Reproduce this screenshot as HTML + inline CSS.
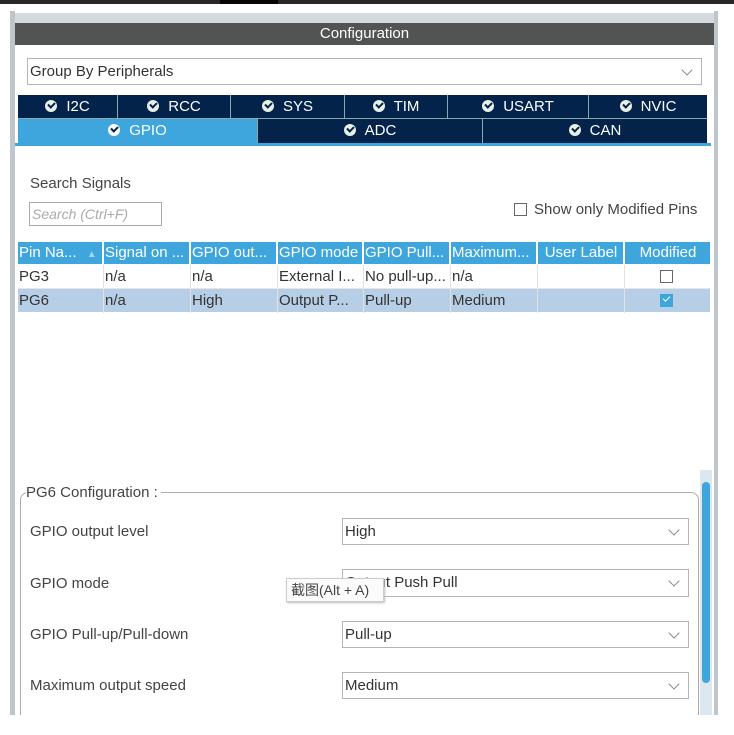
<!DOCTYPE html>
<html><head><meta charset="utf-8"><style>
*{margin:0;padding:0;box-sizing:border-box}
body{width:734px;height:724px;background:#fff;position:relative;overflow:hidden;font-family:"Liberation Sans","Noto Sans CJK SC",sans-serif;color:#333}
.a{position:absolute}
.sel{position:absolute;border:1px solid #b4b4b4;background:#fff;font-size:15px;padding-left:2px;line-height:25px;color:#333}
.chev{position:absolute;right:10px;top:7px;width:8px;height:8px;border-right:1px solid #888;border-bottom:1px solid #888;transform:rotate(45deg)}
.tab{position:absolute;background:#03234b;color:#fff;font-size:15px;text-align:center;line-height:23px;border-right:1px solid #8aa}
.ck{display:inline-block;width:12px;height:12px;border-radius:50%;background:#e8f0e8;vertical-align:-1px;margin-right:9px;position:relative}
.ck:after{content:"";position:absolute;left:3px;top:2px;width:5px;height:3px;border-left:2px solid #03234b;border-bottom:2px solid #03234b;transform:rotate(-45deg)}
.th{position:absolute;top:242px;height:22px;background:#3ea6dc;color:#fff;font-size:15px;line-height:22px;padding-left:1px;border-right:2px solid #fff;white-space:nowrap;overflow:hidden}
.td{position:absolute;height:24px;font-size:15px;line-height:24px;padding-left:1px;border-right:1px solid #e2e2e2;white-space:nowrap}
.lbl{position:absolute;left:30px;font-size:15px;color:#444}
</style></head><body>
<div class="a" style="left:0;top:0;width:734px;height:4px;background:#262626"></div>
<div class="a" style="left:220px;top:0;width:58px;height:4px;background:#050505"></div>
<div class="a" style="left:10px;top:11px;width:5px;height:704px;background:#bfc6cb"></div>
<div class="a" style="left:714px;top:11px;width:4px;height:704px;background:#bfc6cb"></div>
<div class="a" style="left:15px;top:13px;width:699px;height:10px;background:#d4dade"></div>
<div class="a" style="left:15px;top:23px;width:699px;height:22px;background:#525454;color:#fff;font-size:15px;text-align:center;line-height:22px">Configuration</div>

<div class="sel" style="left:27px;top:58px;width:675px;height:27px">Group By Peripherals<span class="chev"></span></div>

<div class="tab" style="left:18px;top:95px;width:100px"><span class="ck"></span>I2C</div>
<div class="tab" style="left:118px;top:95px;width:113px"><span class="ck"></span>RCC</div>
<div class="tab" style="left:231px;top:95px;width:114px"><span class="ck"></span>SYS</div>
<div class="tab" style="left:345px;top:95px;width:103px"><span class="ck"></span>TIM</div>
<div class="tab" style="left:448px;top:95px;width:141px"><span class="ck"></span>USART</div>
<div class="tab" style="left:589px;top:95px;width:118px;border-right:none"><span class="ck"></span>NVIC</div>
<div class="a" style="left:18px;top:118px;width:689px;height:1px;background:#8aa"></div>
<div class="tab" style="left:18px;top:119px;width:240px;background:#3ea6dc;height:24px"><span class="ck" style="background:#fff"></span>GPIO</div>
<div class="tab" style="left:258px;top:119px;width:225px;height:24px"><span class="ck"></span>ADC</div>
<div class="tab" style="left:483px;top:119px;width:224px;height:24px;border-right:none"><span class="ck"></span>CAN</div>
<div class="a" style="left:15px;top:143px;width:696px;height:3px;background:#3ea6dc"></div>

<div class="lbl" style="top:175px">Search Signals</div>
<div class="a" style="left:29px;top:202px;width:133px;height:24px;border:1px solid #aaa;font-size:14px;font-style:italic;color:#aaa;line-height:22px;padding-left:2px">Search (Ctrl+F)</div>
<div class="a" style="left:514px;top:203px;width:13px;height:13px;border:1px solid #666"></div>
<div class="a" style="left:534px;top:201px;font-size:15px;color:#444">Show only Modified Pins</div>

<div class="th" style="left:18px;width:86px">Pin Na... <span style="color:#a8d4ee;font-size:10px;margin-left:6px">▲</span></div>
<div class="th" style="left:104px;width:87px">Signal on ...</div>
<div class="th" style="left:191px;width:87px">GPIO out...</div>
<div class="th" style="left:278px;width:86px">GPIO mode</div>
<div class="th" style="left:364px;width:87px">GPIO Pull...</div>
<div class="th" style="left:451px;width:87px">Maximum...</div>
<div class="th" style="left:538px;width:87px;text-align:center">User Label</div>
<div class="th" style="left:625px;width:85px;text-align:center;border-right:none">Modified</div>

<div class="a" style="left:18px;top:264px;width:692px;height:25px;background:#fff;border-bottom:1px solid #e6e6e6"></div>
<div class="a" style="left:18px;top:289px;width:692px;height:23px;background:#b7cfe6"></div>
<div class="td" style="left:18px;top:265px;width:86px">PG3</div>
<div class="td" style="left:104px;top:265px;width:87px">n/a</div>
<div class="td" style="left:191px;top:265px;width:87px">n/a</div>
<div class="td" style="left:278px;top:265px;width:86px">External I...</div>
<div class="td" style="left:364px;top:265px;width:87px">No pull-up...</div>
<div class="td" style="left:451px;top:265px;width:87px">n/a</div>
<div class="td" style="left:538px;top:265px;width:87px"></div>
<div class="a" style="left:660px;top:270px;width:13px;height:13px;border:1px solid #666;background:#fff"></div>
<div class="td" style="left:18px;top:289px;width:86px">PG6</div>
<div class="td" style="left:104px;top:289px;width:87px">n/a</div>
<div class="td" style="left:191px;top:289px;width:87px">High</div>
<div class="td" style="left:278px;top:289px;width:86px">Output P...</div>
<div class="td" style="left:364px;top:289px;width:87px">Pull-up</div>
<div class="td" style="left:451px;top:289px;width:87px">Medium</div>
<div class="td" style="left:538px;top:289px;width:87px"></div>
<div class="a" style="left:660px;top:294px;width:13px;height:13px;background:#3ea6dc"><div style="position:absolute;left:3px;top:2px;width:7px;height:4px;border-left:1.5px solid #fff;border-bottom:1.5px solid #fff;transform:rotate(-45deg)"></div></div>

<div class="a" style="left:20px;top:492px;width:679px;height:240px;border:1px solid #aaa;border-radius:8px"></div>
<div class="a" style="left:26px;top:484px;background:#fff;padding-right:3px;font-size:15px;color:#444">PG6 Configuration :</div>
<div class="a" style="left:700px;top:470px;width:12px;height:245px;background:#dde7ef"></div>
<div class="a" style="left:702px;top:482px;width:8px;height:201px;background:#3ea6dc;border-radius:4px"></div>

<div class="lbl" style="top:523px">GPIO output level</div>
<div class="sel" style="left:342px;top:518px;width:347px;height:27px">High<span class="chev"></span></div>
<div class="lbl" style="top:575px">GPIO mode</div>
<div class="sel" style="left:342px;top:569px;width:347px;height:28px">Output Push Pull<span class="chev"></span></div>
<div class="lbl" style="top:626px">GPIO Pull-up/Pull-down</div>
<div class="sel" style="left:342px;top:621px;width:347px;height:27px">Pull-up<span class="chev"></span></div>
<div class="lbl" style="top:677px">Maximum output speed</div>
<div class="sel" style="left:342px;top:672px;width:347px;height:27px">Medium<span class="chev"></span></div>

<div class="a" style="left:286px;top:578px;width:98px;height:24px;background:#fbfbfb;border:1px solid #ccc;box-shadow:1px 1px 2px #bbb;font-size:14px;line-height:22px;padding-left:4px;color:#444">截图(Alt + A)</div>
<div class="a" style="left:0;top:715px;width:734px;height:20px;background:#fff"></div>
</body></html>
